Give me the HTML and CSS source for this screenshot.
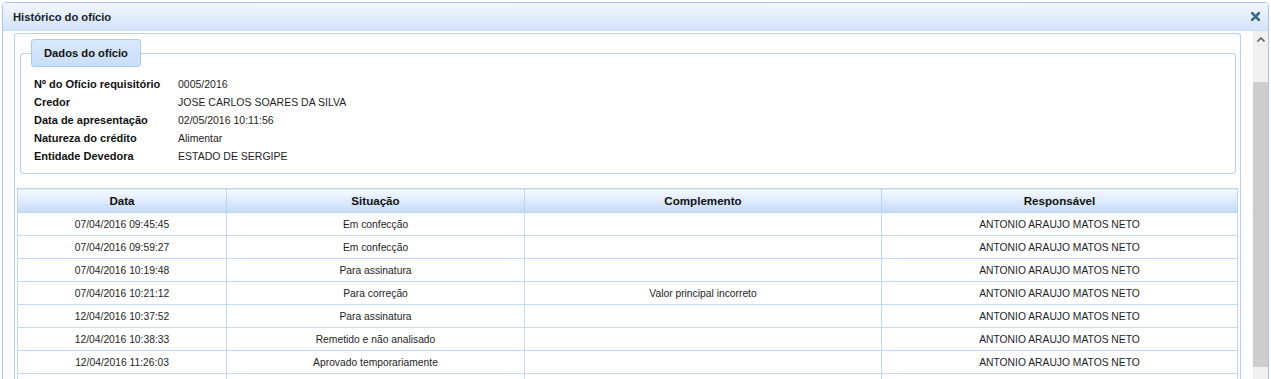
FILE: index.html
```html
<!DOCTYPE html>
<html lang="pt-BR">
<head>
    <meta charset="UTF-8">
    <meta name="viewport" content="width=device-width, initial-scale=1.0">
    <title>Histórico do ofício</title>
    <link rel="stylesheet" href="styles.css">
</head>
<body>
    <div class="dialog">
        <div class="dialog-header">
            <span class="dialog-title">Histórico do ofício</span>
            <svg class="close" width="9" height="9" viewBox="0 0 9 9">
                <path d="M1 1 L8 8 M8 1 L1 8" stroke="#3b6a88" stroke-width="2.6" stroke-linecap="square"/>
            </svg>
        </div>

        <div class="dialog-body">
            <div class="scroll-area">
                <fieldset class="group">
                    <legend>Dados do ofício</legend>
                    <div class="info">
                        <div class="info-label">Nº do Ofício requisitório</div>
                        <div class="info-value">0005/2016</div>
                        <div class="info-label">Credor</div>
                        <div class="info-value">JOSE CARLOS SOARES DA SILVA</div>
                        <div class="info-label">Data de apresentação</div>
                        <div class="info-value">02/05/2016 10:11:56</div>
                        <div class="info-label">Natureza do crédito</div>
                        <div class="info-value">Alimentar</div>
                        <div class="info-label">Entidade Devedora</div>
                        <div class="info-value">ESTADO DE SERGIPE</div>
                    </div>
                </fieldset>

                <table class="history">
                    <colgroup>
                        <col style="width: 209px">
                        <col style="width: 298px">
                        <col style="width: 357px">
                        <col>
                    </colgroup>
                    <thead>
                        <tr>
                            <th>Data</th>
                            <th>Situação</th>
                            <th>Complemento</th>
                            <th>Responsável</th>
                        </tr>
                    </thead>
                    <tbody>
                        <tr><td>07/04/2016 09:45:45</td><td>Em confecção</td><td></td><td>ANTONIO ARAUJO MATOS NETO</td></tr>
                        <tr><td>07/04/2016 09:59:27</td><td>Em confecção</td><td></td><td>ANTONIO ARAUJO MATOS NETO</td></tr>
                        <tr><td>07/04/2016 10:19:48</td><td>Para assinatura</td><td></td><td>ANTONIO ARAUJO MATOS NETO</td></tr>
                        <tr><td>07/04/2016 10:21:12</td><td>Para correção</td><td>Valor principal incorreto</td><td>ANTONIO ARAUJO MATOS NETO</td></tr>
                        <tr><td>12/04/2016 10:37:52</td><td>Para assinatura</td><td></td><td>ANTONIO ARAUJO MATOS NETO</td></tr>
                        <tr><td>12/04/2016 10:38:33</td><td>Remetido e não analisado</td><td></td><td>ANTONIO ARAUJO MATOS NETO</td></tr>
                        <tr><td>12/04/2016 11:26:03</td><td>Aprovado temporariamente</td><td></td><td>ANTONIO ARAUJO MATOS NETO</td></tr>
                        <tr><td></td><td></td><td></td><td></td></tr>
                    </tbody>
                </table>
            </div>

            <div class="scrollbar">
                <div class="scroll-up">
                    <svg width="8" height="5" viewBox="0 0 8 5">
                        <path d="M0.5 4.5 L4 1 L7.5 4.5" fill="none" stroke="#505050" stroke-width="1.4"/>
                    </svg>
                </div>
                <div class="scroll-thumb"></div>
            </div>
        </div>
    </div>
</body>
</html>
```

FILE: styles.css
```css
html, body {
    margin: 0;
    height: 100%;
    overflow: hidden;
    background: #ffffff;
}
body {
    font-family: "Liberation Sans", Arial, sans-serif;
    color: #1e1e1e;
    padding: 2px 2px 0 2px;
    box-sizing: border-box;
}
.dialog {
    border: 1px solid #a9c8ee;
    border-radius: 4px 4px 0 0;
    height: 420px;
    background: #ffffff;
}
.dialog-header {
    height: 27px;
    display: flex;
    align-items: center;
    justify-content: space-between;
    padding: 0 8px 0 10px;
    background: linear-gradient(#f3f7fe, #d2e3f9);
    border-bottom: 1px solid #c9dcf5;
    border-radius: 3px 3px 0 0;
}
.dialog-title {
    font-size: 11.2px;
    font-weight: bold;
    color: #15202c;
}
.close {
    display: block;
}
.dialog-body {
    display: flex;
    padding-left: 11px;
}
.scroll-area {
    flex: 1;
    margin-top: 2px;
    padding: 5px 2px 0 2px;
    border: 1px solid #b9d3f3;
    border-bottom: none;
    border-radius: 3px 3px 0 0;
    height: 400px;
}
.group {
    margin: 0 2px 0 3px;
    padding: 8px 13px 8px 10px;
    border: 1px solid #b7d0f1;
    border-radius: 3px;
}
.group legend {
    margin-left: 0;
    padding: 0 12px;
    height: 28px;
    box-sizing: border-box;
    line-height: 26px;
    font-size: 11.2px;
    font-weight: bold;
    color: #111;
    background: linear-gradient(#dbe9fc, #c8def9);
    border: 1px solid #abc9ee;
    border-radius: 3px;
}
.info {
    display: grid;
    grid-template-columns: 144px auto;
    margin-left: 3px;
    line-height: 18px;
}
.info-label {
    font-size: 11px;
    font-weight: bold;
    color: #111;
}
.info-value {
    font-size: 10.5px;
}
.history {
    width: 100%;
    margin-top: 14px;
    border-collapse: collapse;
    table-layout: fixed;
    font-size: 10.3px;
}
.history th,
.history td {
    border: 1px solid #c3d9f5;
    padding: 0;
    text-align: center;
    white-space: nowrap;
    overflow: hidden;
}
.history th {
    height: 23px;
    font-size: 11.6px;
    font-weight: bold;
    color: #111;
    background: linear-gradient(#f7faff, #c4dbf8);
    border-color: #bcd3f2;
}
.history td {
    height: 22px;
}
.scrollbar {
    width: 15px;
    margin-left: 12px;
    background: #f0f0f0;
    height: 400px;
}
.scroll-up {
    height: 17px;
    display: flex;
    align-items: center;
    justify-content: center;
}
.scroll-up svg {
    display: block;
}
.scroll-thumb {
    margin-top: 34px;
    height: 285px;
    background: #cdcdcd;
}
```
